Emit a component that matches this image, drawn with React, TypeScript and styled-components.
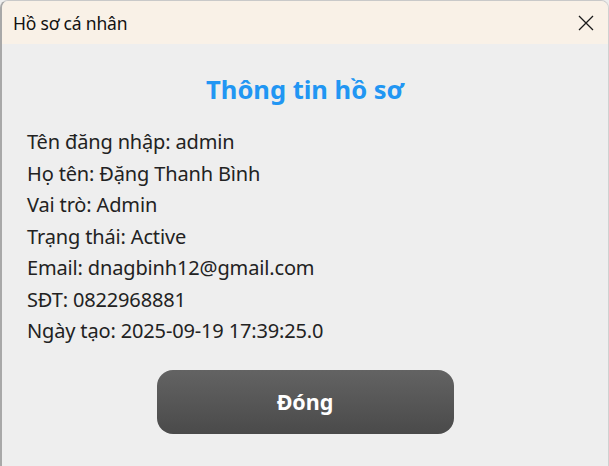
import React from "react";
import styled, { createGlobalStyle } from "styled-components";

const Global = createGlobalStyle`
  html, body { margin: 0; padding: 0; background: #eeeeee; }
  body { font-family: "Noto Sans", "Open Sans", sans-serif; }
`;

const Window = styled.div`
  box-sizing: border-box;
  width: 609px;
  height: 466px;
  border-left: 2px solid #a8a8a8;
  border-top: 1px solid #c9c9c9;
  border-right: 1px solid #d0d0d0;
  border-radius: 8px 8px 0 0;
  overflow: hidden;
  background: #eeeeee;
  display: flex;
  flex-direction: column;
`;

const TitleBar = styled.div`
  height: 43px;
  flex: 0 0 43px;
  background: #f9f1e7;
  display: flex;
  align-items: center;
  justify-content: space-between;
  padding: 0 13px 0 11px;
`;

const TitleText = styled.span`
  font-size: 17.5px;
  color: #111;
  letter-spacing: -0.2px;
`;

const CloseButton = styled.button`
  border: none;
  background: transparent;
  padding: 0;
  width: 18px;
  height: 18px;
  display: flex;
  align-items: center;
  justify-content: center;
  cursor: pointer;
`;

const Body = styled.div`
  flex: 1;
  display: flex;
  flex-direction: column;
  padding: 29px 0 0 25px;
`;

const Heading = styled.h1`
  margin: 0 0 25px -25px;
  text-align: center;
  font-size: 25.5px;
  line-height: 32px;
  font-weight: 700;
  color: #2196f3;
`;

const InfoList = styled.div`
  display: flex;
  flex-direction: column;
`;

const InfoRow = styled.div`
  height: 31.5px;
  display: flex;
  align-items: flex-start;
`;

const InfoText = styled.div`
  font-size: 20px;
  line-height: 24px;
  color: #222;
  letter-spacing: -0.15px;
`;

const ButtonRow = styled.div`
  display: flex;
  justify-content: center;
  margin: 19px 0 0 -25px;
`;

const CloseAction = styled.button`
  width: 297px;
  height: 64px;
  border: none;
  border-radius: 16px;
  background: linear-gradient(#636363, #4a4a4a);
  color: #fff;
  font-family: "Noto Sans", "Open Sans", sans-serif;
  font-size: 21.5px;
  font-weight: 700;
  cursor: pointer;
`;

const rows = [
  "Tên đăng nhập: admin",
  "Họ tên: Đặng Thanh Bình",
  "Vai trò: Admin",
  "Trạng thái: Active",
  "Email: dnagbinh12@gmail.com",
  "SĐT: 0822968881",
  "Ngày tạo: 2025-09-19 17:39:25.0",
];

export default function App() {
  return (
    <>
      <Global />
      <Window>
        <TitleBar>
          <TitleText>Hồ sơ cá nhân</TitleText>
          <CloseButton aria-label="Close">
            <svg width="16" height="16" viewBox="0 0 16 16">
              <path d="M1 1 L15 15 M15 1 L1 15" stroke="#1a1a1a" strokeWidth="1.3" fill="none" />
            </svg>
          </CloseButton>
        </TitleBar>
        <Body>
          <Heading>Thông tin hồ sơ</Heading>
          <InfoList>
            {rows.map((r) => (
              <InfoRow key={r}>
                <InfoText>{r}</InfoText>
              </InfoRow>
            ))}
          </InfoList>
          <ButtonRow>
            <CloseAction>Đóng</CloseAction>
          </ButtonRow>
        </Body>
      </Window>
    </>
  );
}
